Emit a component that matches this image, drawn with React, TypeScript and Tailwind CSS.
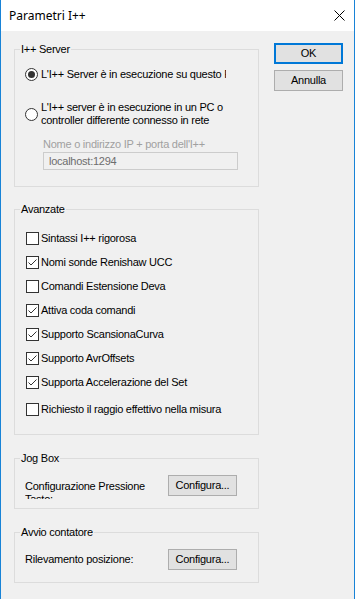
import React, { useState } from 'react';

interface OptionItem {
  id: string;
  label: string;
  checked: boolean;
  gap: string;
}

const initialOptions: OptionItem[] = [
  { id: 'strict', label: 'Sintassi I++ rigorosa', checked: false, gap: 'mt-[16px]' },
  { id: 'renishaw', label: 'Nomi sonde Renishaw UCC', checked: true, gap: 'mt-[11px]' },
  { id: 'deva', label: 'Comandi Estensione Deva', checked: false, gap: 'mt-[11px]' },
  { id: 'queue', label: 'Attiva coda comandi', checked: true, gap: 'mt-[11px]' },
  { id: 'scan', label: 'Supporto ScansionaCurva', checked: true, gap: 'mt-[11px]' },
  { id: 'avr', label: 'Supporto AvrOffsets', checked: true, gap: 'mt-[11px]' },
  { id: 'accel', label: 'Supporta Accelerazione del Set', checked: true, gap: 'mt-[11px]' },
  { id: 'radius', label: 'Richiesto il raggio effettivo nella misura', checked: false, gap: 'mt-[14px]' },
];

function GroupBox({ title, className, children }: { title: string; className: string; children: React.ReactNode }) {
  return (
    <fieldset className={`border border-[#dcdcdc] ${className}`}>
      <legend className="ml-[5px] px-[1px] leading-[14px]">{title}</legend>
      {children}
    </fieldset>
  );
}

function Radio({ checked, onClick }: { checked: boolean; onClick: () => void }) {
  return (
    <span
      onClick={onClick}
      className="w-[13px] h-[13px] shrink-0 rounded-full border border-[#333333] bg-white flex items-center justify-center"
    >
      {checked && <span className="w-[7px] h-[7px] rounded-full bg-[#333333]" />}
    </span>
  );
}

function CheckBox({ checked, onClick }: { checked: boolean; onClick: () => void }) {
  return (
    <span onClick={onClick} className="w-[13px] h-[13px] shrink-0 border border-[#333333] bg-white flex">
      {checked && (
        <svg width="11" height="11" viewBox="0 0 11 11" fill="none">
          <path d="M1.5 5.5 L4 8 L9.5 2.5" stroke="#333333" strokeWidth="1" />
        </svg>
      )}
    </span>
  );
}

function DlgButton({ label, primary }: { label: string; primary?: boolean }) {
  return (
    <button
      type="button"
      className={`w-[69px] h-[21px] bg-[#e1e1e1] text-black leading-none ${
        primary ? 'border-2 border-[#0078d7]' : 'border border-[#adadad]'
      }`}
    >
      {label}
    </button>
  );
}

export default function App() {
  const [localServer, setLocalServer] = useState(true);
  const [options, setOptions] = useState<OptionItem[]>(initialOptions);

  const toggleOption = (id: string) => {
    setOptions(options.map((o) => (o.id === id ? { ...o, checked: !o.checked } : o)));
  };

  return (
    <div className="w-[355px] h-[599px] overflow-hidden bg-[#f0f0f0] border-x border-[#1883d7] flex flex-col text-[11px] tracking-[-0.25px] text-black font-['Liberation_Sans',Arial,sans-serif]">
      {/* title bar */}
      <div className="h-[31px] shrink-0 bg-white flex items-center justify-between pl-[8px] pr-[9px]">
        <span className="text-[12px] tracking-normal font-['Noto_Sans',sans-serif]">Parametri I++</span>
        <svg width="11" height="11" viewBox="0 0 11 11">
          <path d="M0.5 0.5 L10.5 10.5 M10.5 0.5 L0.5 10.5" stroke="#000" strokeWidth="1" />
        </svg>
      </div>

      <div className="flex pl-[13px]">
        <div className="w-[245px] flex flex-col">
          <GroupBox title="I++ Server" className="mt-[11px] pb-[16px]">
            <div className="flex items-center gap-[3px] pl-[10px] mt-[12px] h-[13px]">
              <Radio checked={localServer} onClick={() => setLocalServer(true)} />
              <span className="w-[185px] overflow-hidden whitespace-nowrap leading-[13px]">
                L'I++ Server è in esecuzione su questo PC
              </span>
            </div>
            <div className="flex items-center gap-[3px] pl-[10px] mt-[20px]">
              <Radio checked={!localServer} onClick={() => setLocalServer(false)} />
              <span className="leading-[13px]">
                L'I++ server è in esecuzione in un PC o
                <br />
                controller differente connesso in rete
              </span>
            </div>
            <div className="pl-[28px] mt-[11px] leading-[13px] text-[#a0a0a0]">Nome o indirizzo IP + porta dell'I++</div>
            <div className="ml-[28px] mt-[1px] w-[195px] h-[18px] border border-[#cccccc] bg-[#f0f0f0] pl-[5px] flex items-center text-[#6d6d6d]">
              localhost:1294
            </div>
          </GroupBox>

          <GroupBox title="Avanzate" className="mt-[15px] pb-[18px]">
            {options.map((o) => (
              <div key={o.id} className={`flex items-center gap-[2px] pl-[11px] h-[13px] ${o.gap}`}>
                <CheckBox checked={o.checked} onClick={() => toggleOption(o.id)} />
                <span className="leading-[13px] whitespace-nowrap">{o.label}</span>
              </div>
            ))}
          </GroupBox>

          <GroupBox title="Jog Box" className="mt-[16px] pb-[12px]">
            <div className="flex items-start h-[21px] pl-[10px] mt-[10px]">
              <div className="w-[130px] h-[19px] mt-[5px] shrink-0 overflow-hidden leading-[13px]">
                Configurazione Pressione Tasto:
              </div>
              <div className="ml-[13px]">
                <DlgButton label="Configura..." />
              </div>
            </div>
          </GroupBox>

          <GroupBox title="Avvio contatore" className="mt-[16px] pb-[12px]">
            <div className="flex items-center pl-[10px] mt-[10px]">
              <div className="w-[130px] leading-[13px]">Rilevamento posizione:</div>
              <div className="ml-[13px]">
                <DlgButton label="Configura..." />
              </div>
            </div>
          </GroupBox>
        </div>

        <div className="ml-[15px] mt-[12px] flex flex-col gap-[6px]">
          <DlgButton label="OK" primary />
          <DlgButton label="Annulla" />
        </div>
      </div>
    </div>
  );
}
